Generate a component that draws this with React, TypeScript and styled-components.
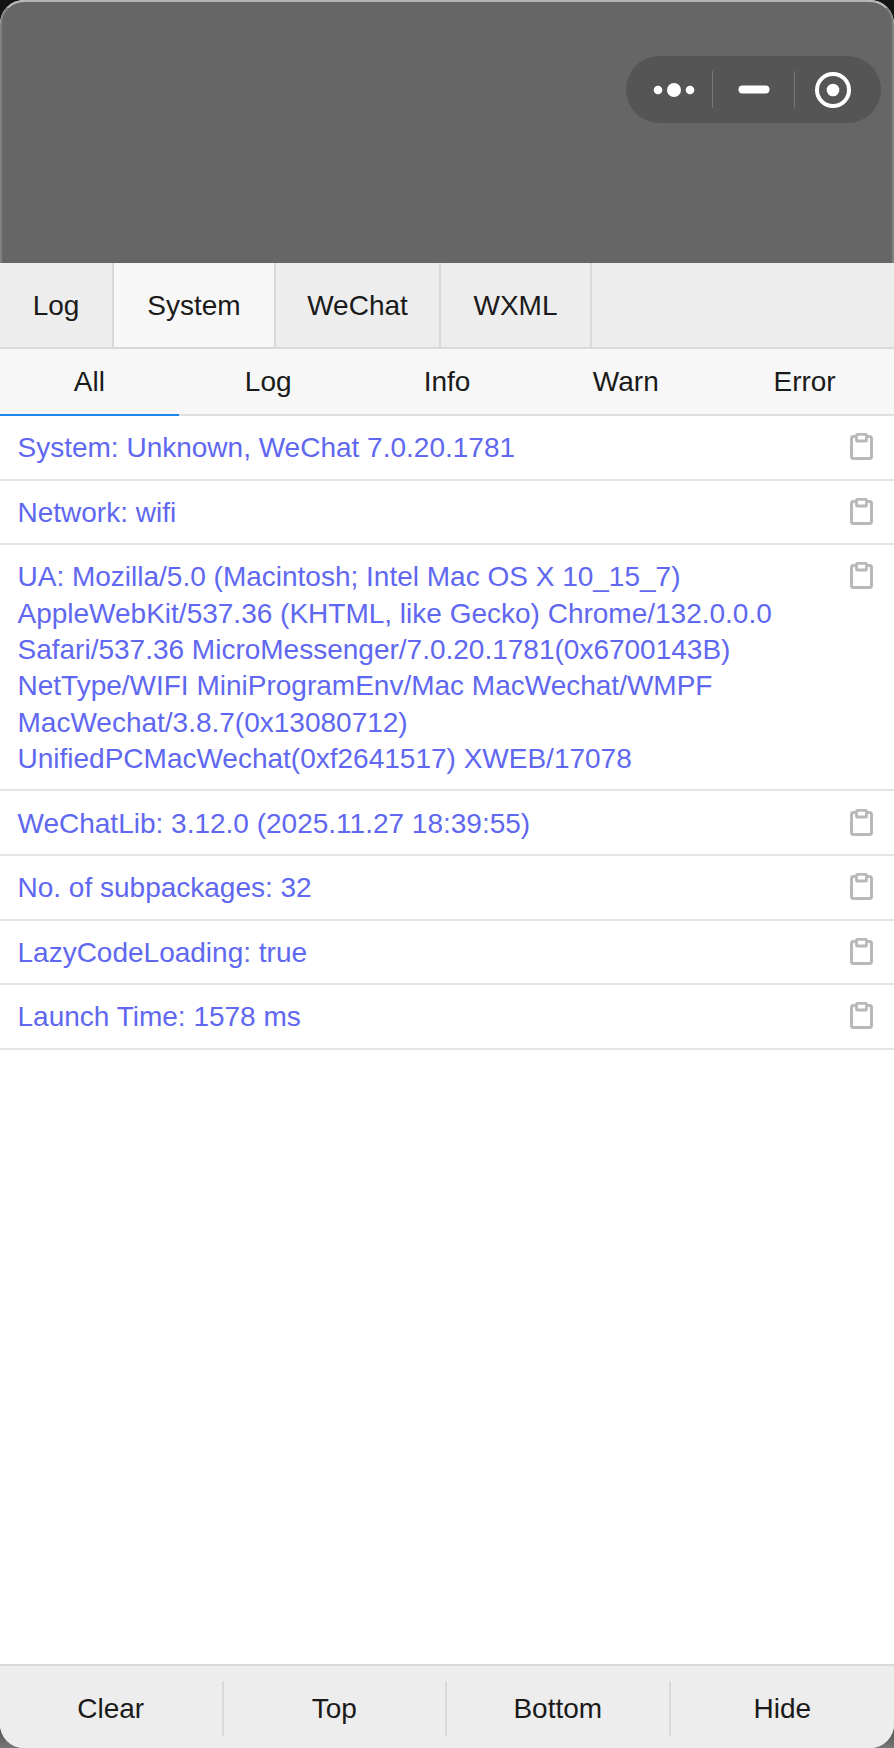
import React from "react";
import styled, { createGlobalStyle } from "styled-components";

const Global = createGlobalStyle`
  html, body { margin: 0; padding: 0; }
  * { box-sizing: border-box; }
  body { background: linear-gradient(180deg, #141414 0, #141414 1700px, #555 1730px, #777 1748px); }
`;

const Phone = styled.div`
  width: 894px;
  height: 1748px;
  display: flex;
  flex-direction: column;
  overflow: hidden;
  border-radius: 24px;
  background: #fff;
  font-family: "Liberation Sans", Arial, sans-serif;
  font-size: 28px;
  color: #1a1a1a;
`;

const Header = styled.div`
  height: 263px;
  flex: none;
  background: #666;
  border-top: 2px solid #b5b5b5;
  border-left: 2px solid #808080;
  border-right: 2px solid #808080;
  border-radius: 24px 24px 0 0;
  display: flex;
  justify-content: flex-end;
  align-items: flex-start;
  padding: 54px 11px 0 0;
`;

const Capsule = styled.div`
  width: 255px;
  height: 67px;
  border-radius: 34px;
  background: #555;
  display: flex;
  align-items: center;
`;

const CapsuleCell = styled.div<{ $w: number; $shift?: number }>`
  width: ${(p) => p.$w}px;
  height: 100%;
  display: flex;
  align-items: center;
  justify-content: center;
  padding-left: ${(p) => (p.$shift && p.$shift > 0 ? p.$shift : 0)}px;
  padding-right: ${(p) => (p.$shift && p.$shift < 0 ? -p.$shift : 0)}px;
`;

const CapsuleLine = styled.div`
  width: 1px;
  height: 37px;
  background: #777;
`;

const Tabs = styled.div`
  height: 86px;
  flex: none;
  display: flex;
  background: #ededed;
  border-bottom: 2px solid #d9d9d9;
`;

const Tab = styled.div<{ $w: number; $active?: boolean }>`
  width: ${(p) => p.$w}px;
  display: flex;
  align-items: center;
  justify-content: center;
  padding-top: 2px;
  background: ${(p) => (p.$active ? "#f7f7f7" : "#ededed")};
  border-right: 2px solid #d9d9d9;
`;

const SubTabs = styled.div`
  height: 67px;
  flex: none;
  display: flex;
  background: #f7f7f7;
  border-bottom: 2px solid #dfdfdf;
`;

const SubTab = styled.div<{ $active?: boolean }>`
  flex: 1;
  display: flex;
  align-items: center;
  justify-content: center;
  margin-bottom: -2px;
  border-bottom: 2px solid ${(p) => (p.$active ? "#1a87f0" : "transparent")};
`;

const List = styled.div`
  flex: 1;
  background: #fff;
`;

const Row = styled.div`
  display: flex;
  align-items: flex-start;
  justify-content: space-between;
  padding: 14.2px 21px 12.1px 17.5px;
  border-bottom: 2px solid #e4e4e4;
  color: #6067f0;
  line-height: 36.33px;
`;

const RowText = styled.div`
  width: 800px;
`;

const CopyIcon = styled.svg`
  flex: none;
  width: 23px;
  height: 27px;
  margin-top: 3px;
`;

const Footer = styled.div`
  height: 84px;
  flex: none;
  display: grid;
  grid-template-columns: repeat(4, 1fr);
  background: #ededed;
  border-top: 2px solid #d9d9d9;
  padding: 15px 0 12px;
`;

const FooterBtn = styled.div<{ $line?: boolean }>`
  display: flex;
  align-items: center;
  justify-content: center;
  border-right: ${(p) => (p.$line ? "2px solid #d9d9d9" : "none")};
`;

const Copy = () => (
  <CopyIcon viewBox="0 0 23 27" fill="none" stroke="#b8b8b8" strokeWidth="3">
    <path d="M5.500 3.500H3.500Q1.500 3.500 1.500 5.500V23.500Q1.500 25.500 3.500 25.500H19.500Q21.500 25.500 21.500 23.500V5.500Q21.500 3.500 19.500 3.500H17.500" />
    <rect x="6.500" y="1.400" width="10" height="6.600" rx="0.800" strokeWidth="2.800" />
  </CopyIcon>
);

const rows = [
  "System: Unknown, WeChat 7.0.20.1781",
  "Network: wifi",
  "UA: Mozilla/5.0 (Macintosh; Intel Mac OS X 10_15_7) AppleWebKit/537.36 (KHTML, like Gecko) Chrome/132.0.0.0 Safari/537.36 MicroMessenger/7.0.20.1781(0x6700143B) NetType/WIFI MiniProgramEnv/Mac MacWechat/WMPF MacWechat/3.8.7(0x13080712) UnifiedPCMacWechat(0xf2641517) XWEB/17078",
  "WeChatLib: 3.12.0 (2025.11.27 18:39:55)",
  "No. of subpackages: 32",
  "LazyCodeLoading: true",
  "Launch Time: 1578 ms",
];

export default function App() {
  return (
    <Phone>
      <Global />
      <Header>
        <Capsule>
          <CapsuleCell $w={86} $shift={9}>
            <svg width="50" height="20" viewBox="0 0 50 20" fill="#fff">
              <circle cx="9" cy="10" r="4.300" />
              <circle cx="25" cy="10" r="7" />
              <circle cx="41" cy="10" r="4.300" />
            </svg>
          </CapsuleCell>
          <CapsuleLine />
          <CapsuleCell $w={81}>
            <svg width="32" height="9" viewBox="0 0 32 9" fill="#fff">
              <rect x="0.500" y="0.500" width="31" height="8" rx="4" />
            </svg>
          </CapsuleCell>
          <CapsuleLine />
          <CapsuleCell $w={86} $shift={-10}>
            <svg width="38" height="38" viewBox="0 0 38 38" fill="none">
              <circle cx="19" cy="19" r="16" stroke="#fff" strokeWidth="4" />
              <circle cx="19" cy="19" r="6.300" fill="#fff" />
            </svg>
          </CapsuleCell>
        </Capsule>
      </Header>
      <Tabs>
        <Tab $w={114}>Log</Tab>
        <Tab $w={162} $active>System</Tab>
        <Tab $w={165}>WeChat</Tab>
        <Tab $w={151}>WXML</Tab>
      </Tabs>
      <SubTabs>
        <SubTab $active>All</SubTab>
        <SubTab>Log</SubTab>
        <SubTab>Info</SubTab>
        <SubTab>Warn</SubTab>
        <SubTab>Error</SubTab>
      </SubTabs>
      <List>
        {rows.map((r) => (
          <Row key={r}>
            <RowText>{r}</RowText>
            <Copy />
          </Row>
        ))}
      </List>
      <Footer>
        <FooterBtn $line>Clear</FooterBtn>
        <FooterBtn $line>Top</FooterBtn>
        <FooterBtn $line>Bottom</FooterBtn>
        <FooterBtn>Hide</FooterBtn>
      </Footer>
    </Phone>
  );
}
